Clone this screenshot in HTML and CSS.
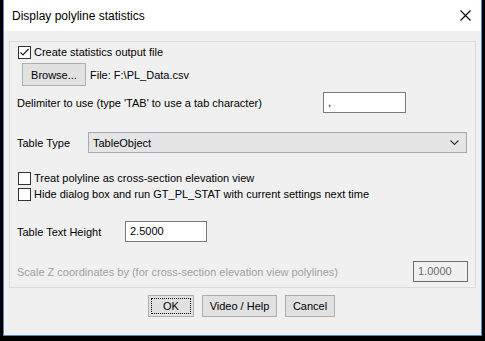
FILE: index.html
```html
<!DOCTYPE html>
<html lang="en">
<head>
    <meta charset="UTF-8">
    <title>Display polyline statistics</title>
    <link rel="stylesheet" href="styles.css">
</head>
<body>
    <div class="window">
        <!-- title bar -->
        <div class="titlebar">
            <span class="title">Display polyline statistics</span>
            <svg class="close" width="11" height="11" viewBox="0 0 11 11">
                <path d="M0.5 0.5 L10.5 10.5 M10.5 0.5 L0.5 10.5" stroke="#000" stroke-width="1.1" fill="none"/>
            </svg>
        </div>

        <div class="content">
            <div class="group">
                <label class="check-row first">
                    <span class="box">
                        <svg width="11" height="11" viewBox="0 0 11 11">
                            <path d="M1.5 5.5 L4 8 L9.5 2" stroke="#222" stroke-width="1.2" fill="none"/>
                        </svg>
                    </span>
                    Create statistics output file
                </label>

                <div class="browse-row">
                    <button class="btn browse">Browse...</button>
                    <span>File: F:\PL_Data.csv</span>
                </div>

                <div class="field-row delim-row">
                    <span>Delimiter to use (type 'TAB' to use a tab character)</span>
                    <div class="input delim">,</div>
                </div>

                <div class="field-row type-row">
                    <span class="type-label">Table Type</span>
                    <div class="select">
                        <span>TableObject</span>
                        <svg width="9" height="6" viewBox="0 0 9 6">
                            <path d="M0.5 0.5 L4.5 4.5 L8.5 0.5" stroke="#333" stroke-width="1.1" fill="none"/>
                        </svg>
                    </div>
                </div>

                <label class="check-row second">
                    <span class="box"></span>
                    Treat polyline as cross-section elevation view
                </label>
                <label class="check-row third">
                    <span class="box"></span>
                    Hide dialog box and run GT_PL_STAT with current settings next time
                </label>

                <div class="field-row height-row">
                    <span class="height-label">Table Text Height</span>
                    <div class="input height">2.5000</div>
                </div>

                <div class="field-row scale-row">
                    <span class="disabled">Scale Z coordinates by (for cross-section elevation view polylines)</span>
                    <div class="input scale">1.0000</div>
                </div>
            </div>

            <div class="buttons">
                <button class="btn ok"><span class="focus">OK</span></button>
                <button class="btn video">Video / Help</button>
                <button class="btn cancel">Cancel</button>
            </div>
        </div>
    </div>
</body>
</html>
```

FILE: styles.css
```css
/* base */
body {
    margin: 0;
    padding: 0 0 0 3px;
    width: 485px;
    height: 341px;
    box-sizing: border-box;
    background-color: #000;
    font-family: "Liberation Sans", Arial, sans-serif;
    font-size: 11px;
    color: #000;
    overflow: hidden;
}

/* dialog window */
.window {
    width: 479px;
    height: 336px;
    box-sizing: border-box;
    border: 1px solid #5a88c8;
    border-top: none;
    background-color: #f0f0f0;
    display: flex;
    flex-direction: column;
}

.titlebar {
    height: 31px;
    background-color: #fff;
    display: flex;
    align-items: center;
    justify-content: space-between;
    padding: 0 10px 0 8px;
}

.title {
    font-size: 12px;
}

.content {
    padding: 10px 5px 0 5px;
}

/* group box */
.group {
    height: 247px;
    box-sizing: border-box;
    border: 1px solid #dcdcdc;
    padding: 0 0 0 7px;
    display: flex;
    flex-direction: column;
}

.check-row {
    display: flex;
    align-items: center;
    height: 13px;
    line-height: 13px;
    margin-left: 1px;
}

.box {
    width: 13px;
    height: 13px;
    box-sizing: border-box;
    border: 1px solid #333;
    background-color: #fff;
    margin-right: 3px;
    display: flex;
    align-items: center;
    justify-content: center;
}

.check-row.first {
    margin-top: 4px;
}

.check-row.second {
    margin-top: 19px;
}

.check-row.third {
    margin-top: 3px;
}

.btn {
    font-family: inherit;
    font-size: 11px;
    background-color: #e1e1e1;
    border: 1px solid #adadad;
    color: #000;
    padding: 0;
    height: 22px;
}

.browse-row {
    display: flex;
    align-items: center;
    margin-top: 4px;
    padding-left: 5px;
}

.browse {
    width: 64px;
    height: 23px;
    margin-right: 4px;
}

.field-row {
    display: flex;
    align-items: center;
}

.input {
    height: 21px;
    box-sizing: border-box;
    border: 1px solid #7a7a7a;
    background-color: #fff;
    padding: 0 4px;
    line-height: 19px;
}

.delim-row {
    margin-top: 6px;
    justify-content: space-between;
    padding-right: 69px;
}

.delim {
    width: 83px;
}

.type-row {
    margin-top: 19px;
}

.type-label {
    width: 71px;
}

.select {
    width: 379px;
    height: 21px;
    box-sizing: border-box;
    border: 1px solid #a7abb0;
    background-color: #e5e5e5;
    display: flex;
    align-items: center;
    justify-content: space-between;
    padding: 0 7px 0 4px;
}

.height-row {
    margin-top: 20px;
}

.height-label {
    width: 108px;
}

.height {
    width: 82px;
}

.scale-row {
    margin-top: 19px;
    justify-content: space-between;
    padding-right: 7px;
}

.disabled {
    color: #a0a0a0;
}

.scale {
    width: 55px;
    background-color: #f0f0f0;
    border-color: #6d6d6d;
    color: #6d6d6d;
}

/* bottom buttons */
.buttons {
    display: flex;
    justify-content: center;
    gap: 8px;
    margin-top: 7px;
    padding-right: 2px;
}

.ok {
    width: 46px;
    padding: 2px;
}

.focus {
    display: flex;
    align-items: center;
    justify-content: center;
    height: 100%;
    box-sizing: border-box;
    border: 1px dotted #000;
}

.video {
    width: 75px;
}

.cancel {
    width: 50px;
}
```
